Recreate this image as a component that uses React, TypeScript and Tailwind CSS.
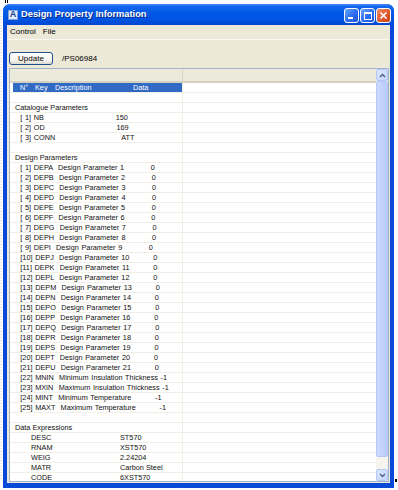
import React from "react";

type Row =
  | { t: "head" }
  | { t: "blank" }
  | { t: "title"; text: string }
  | { t: "pre"; text: string }
  | { t: "expr"; k: string; v: string };

const letters = "ABCDEFGHIJKLMNOPQRSTU";
const idx = (n: number) => `[${String(n).padStart(2, " ")}]`;

const designItems: [string, string, string][] = [
  ...letters
    .split("")
    .map((c, i) => [`DEP${c}`, `Design Parameter ${i + 1}`, "0"] as [string, string, string]),
  ["MNIN", "Minimum Insulation Thickness", "-1"],
  ["MXIN", "Maximum Insulation Thickness", "-1"],
  ["MINT", "Minimum Temperature", "-1"],
  ["MAXT", "Maximum Temperature", "-1"],
];

const rows: Row[] = [
  { t: "head" },
  { t: "blank" },
  { t: "title", text: "Catalogue Parameters" },
  ...[
    ["NB", "150"],
    ["OD", "169"],
    ["CONN", "ATT"],
  ].map(([k, v], i) => ({
    t: "pre" as const,
    text: `  ${idx(i + 1)} ${k.padEnd(4, " ")}${" ".repeat(25)}${v}`,
  })),
  { t: "blank" },
  { t: "title", text: "Design Parameters" },
  ...designItems.map(([k, d, v], i) => ({
    t: "pre" as const,
    text: `  ${idx(i + 1)} ${k.padEnd(4, " ")}  ${d.padEnd(27, " ")} ${v}`,
  })),
  { t: "blank" },
  { t: "title", text: "Data Expressions" },
  ...[
    ["DESC", "ST570"],
    ["RNAM", "XST570"],
    ["WEIG", "2.24204"],
    ["MATR", "Carbon Steel"],
    ["CODE", "6XST570"],
  ].map(([k, v]) => ({ t: "expr" as const, k, v })),
];

function RowView({ r }: { r: Row }) {
  let content: React.ReactNode = null;
  if (r.t === "head") {
    content = (
      <div className="ml-[3px] w-[169px] h-full bg-[#316AC5] flex items-center text-white text-[7.3px] leading-[9px] pl-[7px]">
        <span className="w-[15px]">N°</span>
        <span className="w-[20px]">Key</span>
        <span className="w-[78px]">Description</span>
        <span>Data</span>
      </div>
    );
  } else if (r.t === "title") {
    content = <div className="pl-[5px] text-[7.3px] leading-[9px] text-[#111] whitespace-pre">{r.text}</div>;
  } else if (r.t === "pre") {
    content = (
      <div className="pl-[5px] text-[7.3px] leading-[9px] text-[#111] whitespace-pre [word-spacing:0.63px]">
        {r.text}
      </div>
    );
  } else if (r.t === "expr") {
    content = (
      <div className="pl-[21px] flex text-[7.3px] leading-[9px] text-[#111] whitespace-pre">
        <span className="w-[89px]">{r.k}</span>
        <span>{r.v}</span>
      </div>
    );
  }
  return (
    <div className="h-[10px] shrink-0 flex border-b border-[#F0EEE5]">
      <div className="w-[173px] h-full border-r border-[#F0EEE5] overflow-visible">{content}</div>
      <div className="flex-1" />
    </div>
  );
}

function ScrollBtn({ up }: { up: boolean }) {
  return (
    <div className="h-[12px] shrink-0 rounded-[2px] border border-[#B4C8F6] bg-[linear-gradient(135deg,#DDE7FE,#C2D3FC)] flex items-center justify-center">
      <svg width="7" height="5" viewBox="0 0 7 5">
        <polyline
          points={up ? "1,4 3.5,1.5 6,4" : "1,1 3.5,3.5 6,1"}
          fill="none"
          stroke="#4D6185"
          strokeWidth="1.4"
        />
      </svg>
    </div>
  );
}

export default function App() {
  return (
    <div className="w-[398px] h-[490px] bg-white relative overflow-hidden font-['Liberation_Sans',Arial,sans-serif]">
      {/* desktop remnants */}
      <div className="absolute left-0 top-[10px] w-[2px] h-[470px] bg-[repeating-linear-gradient(to_bottom,#E4E4E4_0px,#E4E4E4_1px,transparent_1px,transparent_3px)]" />
      <div className="absolute left-[5px] top-0 w-[1px] h-[3px] bg-black" />
      <div className="absolute left-[7px] top-0 w-[1px] h-[3px] bg-black" />
      <div className="absolute left-[395px] top-[479px] w-[2px] h-[3px] bg-black" />

      <div className="ml-[3px] mt-[4px] w-[391px] h-[484px] rounded-t-[7px] bg-[#0A48D8] flex flex-col overflow-hidden">
        {/* title bar */}
        <div className="h-[21px] shrink-0 flex bg-[linear-gradient(to_bottom,#4A93F7_0%,#1567EE_10%,#0058E6_45%,#0154E0_75%,#0046D2_100%)]">
          <div className="flex items-center pl-[5px] flex-1">
            <div className="w-[10px] h-[10px] bg-[#E3ECFA] border border-[#7FA3DA] flex items-center justify-center text-[#1B3E93] text-[9px] font-bold leading-none">
              A
            </div>
            <span className="ml-[3px] text-white font-bold text-[9.3px] leading-none [text-shadow:1px_1px_0_#0B2A8A]">
              Design Property Information
            </span>
          </div>
          <div className="flex gap-[1px] mt-[4px] mr-[3px] self-start">
            <div className="w-[15px] h-[15px] rounded-[3px] border border-white bg-[linear-gradient(135deg,#6AA6FF,#2B6CF0_55%,#1F55DA)] flex items-end pl-[3px] pb-[3px]">
              <div className="w-[5px] h-[2px] bg-white" />
            </div>
            <div className="w-[15px] h-[15px] rounded-[3px] border border-white bg-[linear-gradient(135deg,#6AA6FF,#2B6CF0_55%,#1F55DA)] flex items-center justify-center">
              <div className="w-[8px] h-[8px] border border-white border-t-2" />
            </div>
            <div className="w-[15px] h-[15px] rounded-[3px] border border-white bg-[linear-gradient(135deg,#F08A62,#E05A2E_55%,#C9441C)] flex items-center justify-center">
              <svg width="9" height="9" viewBox="0 0 9 9">
                <path d="M1.5 1.5 L7.5 7.5 M7.5 1.5 L1.5 7.5" stroke="white" strokeWidth="1.7" />
              </svg>
            </div>
          </div>
        </div>

        {/* body */}
        <div className="flex-1 px-[4px] pb-[5px] min-h-0 flex">
          <div className="flex-1 bg-[#ECE9D8] flex flex-col min-h-0">
            {/* menu */}
            <div className="h-[14px] shrink-0 flex items-center pl-[3px] text-[8px] text-black">
              <span>Control</span>
              <span className="ml-[7px]">File</span>
            </div>
            <div className="h-[1px] shrink-0 bg-[#F8F7F1]" />
            {/* toolbar */}
            <div className="h-[28px] shrink-0 pt-[12px] pl-[2px] flex items-start">
              <div className="w-[44px] h-[13px] rounded-[3px] border border-[#1F4F8A] bg-[linear-gradient(to_bottom,#FFFFFF,#F3F2EC_70%,#DCD8CC)] flex items-center justify-center text-[8px] text-black leading-none">
                Update
              </div>
              <span className="ml-[9px] mt-[2px] text-[8px] text-black leading-[10px]">/PS06984</span>
            </div>
            {/* list view */}
            <div className="flex-1 ml-[2px] mr-[1px] mb-[1px] border border-[#A3B3C9] bg-white flex min-h-0 overflow-hidden">
              <div className="flex-1 flex flex-col min-w-0 overflow-hidden">
                <div className="h-[14px] shrink-0 flex bg-[#EBEADB] border-b-2 border-[#D5D1C1]">
                  <div className="w-[173px] h-full border-r border-[#D8D4C6]" />
                  <div className="flex-1" />
                </div>
                {rows.map((r, i) => (
                  <RowView key={i} r={r} />
                ))}
              </div>
              <div className="w-[12px] shrink-0 bg-[#F5F4EF] flex flex-col">
                <ScrollBtn up />
                <div className="h-[376px] shrink-0 rounded-[2px] border border-[#B4C8F6] bg-[linear-gradient(to_right,#CCDAFD,#C0D2FC_60%,#B8CCF9)]" />
                <div className="flex-1" />
                <ScrollBtn up={false} />
              </div>
            </div>
          </div>
        </div>
      </div>
    </div>
  );
}
